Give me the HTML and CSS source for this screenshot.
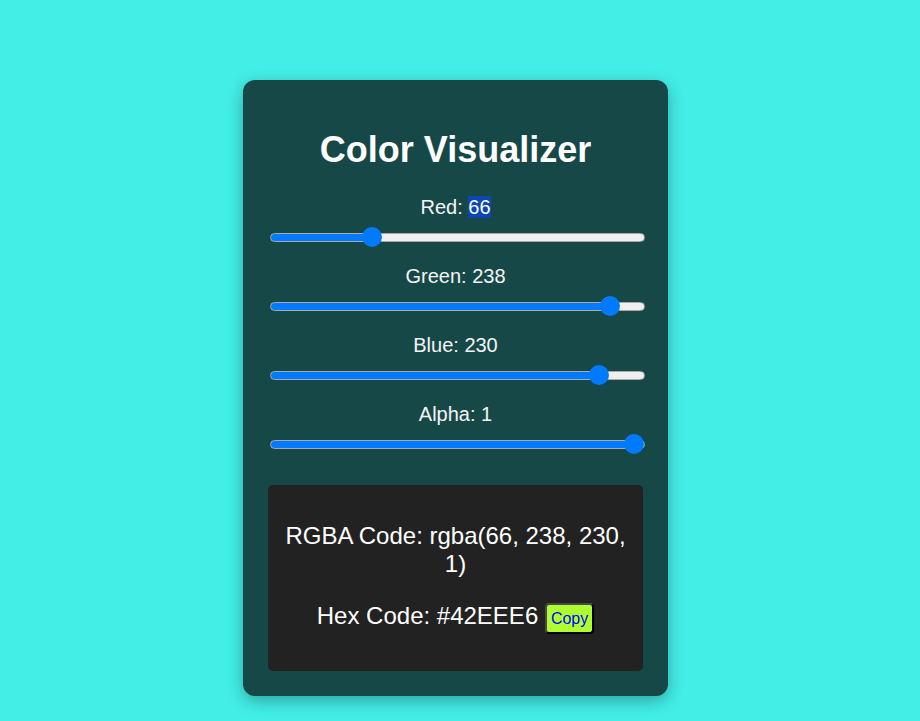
FILE: index.html
```html
<!DOCTYPE html>
<html lang="en">
<head>
<meta charset="utf-8">
<title>Color Visualizer</title>
<link rel="stylesheet" href="styles.css">
</head>
<body>
<div class="page">
  <div class="card">
    <h1 class="title">Color Visualizer</h1>
    <div class="group">
      <label class="label" for="r">Red: <span class="sel">66</span></label>
      <input class="slider" id="r" type="range" min="0" max="255" value="66" style="--v:0.2588">
    </div>
    <div class="group">
      <label class="label" for="g">Green: 238</label>
      <input class="slider" id="g" type="range" min="0" max="255" value="238" style="--v:0.9333">
    </div>
    <div class="group">
      <label class="label" for="b">Blue: 230</label>
      <input class="slider" id="b" type="range" min="0" max="255" value="230" style="--v:0.9020">
    </div>
    <div class="group">
      <label class="label" for="a">Alpha: 1</label>
      <input class="slider" id="a" type="range" min="0" max="1" step="0.01" value="1" style="--v:1">
    </div>
    <div class="result">
      <p class="code">RGBA Code: rgba(66, 238, 230, 1)</p>
      <p class="code">Hex Code: #42EEE6 <button class="copy" type="button">Copy</button></p>
    </div>
  </div>
</div>
</body>
</html>
```
FILE: styles.css
```css
html, body {
  margin: 0;
  padding: 0;
}
body {
  background: #42eee6;
  font-family: "Liberation Sans", Arial, sans-serif;
  color: #ffffff;
}
.page {
  display: flex;
  justify-content: center;
  align-items: flex-start;
  padding: 80px 9px 0 0;
  min-height: 721px;
  box-sizing: border-box;
}
.card {
  width: 375px;
  padding: 25px;
  background: #174848;
  border-radius: 12px;
  box-shadow: 0 5px 16px rgba(0, 0, 0, 0.3);
}
.title {
  margin: 24px 0;
  font-size: 36px;
  font-weight: bold;
  line-height: 42px;
  text-align: center;
}
.label {
  display: block;
  font-size: 20px;
  line-height: 24px;
  text-align: center;
  color: #f4f4f4;
}
.sel {
  background: #0b46b2;
  color: #ffffff;
}
.slider {
  -webkit-appearance: none;
  appearance: none;
  display: block;
  width: 100%;
  height: 20px;
  margin: 8px 0 17px 2px;
  padding: 0;
  background: transparent;
}
.slider::-webkit-slider-runnable-track {
  height: 9px;
  border-radius: 5px;
  box-sizing: border-box;
  border: 1px solid #a9a9a9;
  background: linear-gradient(to right,
    #007bff calc(10px + var(--v) * (100% - 20px)),
    #efefef calc(10px + var(--v) * (100% - 20px)));
}
.slider::-webkit-slider-thumb {
  -webkit-appearance: none;
  appearance: none;
  width: 20px;
  height: 20px;
  margin-top: -6.5px;
  border-radius: 50%;
  background: #007bff;
  border: none;
}
.result {
  margin-top: 31px;
  padding: 13px;
  background: #222222;
  border-radius: 5px;
  text-align: center;
}
.code {
  margin: 24px 0;
  font-size: 24px;
}
.copy {
  font-family: "Liberation Sans", Arial, sans-serif;
  font-size: 16px;
  line-height: 19px;
  color: #0000ff;
  background: #adff2f;
  padding: 4px 4px;
  border: 2px solid;
  border-color: #4a4a4a #000000 #000000 #4a4a4a;
  border-radius: 4px;
  margin: 0;
}
```
